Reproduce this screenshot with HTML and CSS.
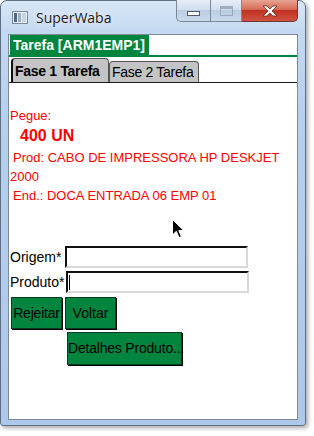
FILE: index.html
```html
<!DOCTYPE html>
<html>
<head>
<meta charset="utf-8">
<link rel="stylesheet" href="styles.css">
</head>
<body>
<div class="window">
  <div class="titlebar">
    <svg class="app-icon" width="16" height="13" viewBox="0 0 16 13">
      <rect x="0.5" y="0.5" width="15" height="12" fill="#e8eef5" stroke="#7a8a9c"/>
      <rect x="2" y="2" width="3" height="9" fill="#4a6a8a"/>
      <rect x="6" y="2" width="3" height="9" fill="#9ab0c6"/>
      <rect x="10" y="2" width="4" height="9" fill="#c8d6e4"/>
    </svg>
    <span class="title">SuperWaba</span>
    <div class="caption-buttons">
      <div class="cbtn cmin"><span class="min-glyph"></span></div>
      <div class="cbtn cmax"><span class="max-glyph"></span></div>
      <div class="cbtn cclose">
        <svg width="18" height="12" viewBox="0 0 18 12">
          <path d="M2 1 L6 1 L9 4 L12 1 L16 1 L11 6 L16 11 L12 11 L9 8 L6 11 L2 11 L7 6 Z" fill="#fff" stroke="#6b2a22" stroke-width="0.8"/>
        </svg>
      </div>
    </div>
  </div>
  <div class="client">
    <div class="header"><span class="header-title">Tarefa [ARM1EMP1]</span></div>
    <div class="tabs">
      <div class="tab tab-active">Fase 1 Tarefa</div>
      <div class="tab">Fase 2 Tarefa</div>
    </div>
    <div class="info">
      <p class="line pegue">Pegue:</p>
      <p class="line qty">400 UN</p>
      <p class="line prod">Prod: CABO DE IMPRESSORA HP DESKJET 2000</p>
      <p class="line end">End.: DOCA ENTRADA 06 EMP 01</p>
    </div>
    <div class="form">
      <div class="field field-origem"><span class="label">Origem*</span><div class="input"></div></div>
      <div class="field field-produto"><span class="label">Produto*</span><div class="input"><span class="caret"></span></div></div>
    </div>
    <div class="btn-row">
      <div class="btn btn-rejeitar">Rejeitar</div>
      <div class="btn btn-voltar">Voltar</div>
    </div>
    <div class="btn-row btn-row2">
      <div class="btn btn-detalhes">Detalhes Produto...</div>
    </div>
    <svg class="cursor" width="13" height="20" viewBox="0 0 13 20">
      <path d="M0.5 0.5 L0.5 16 L4.3 12.3 L7 18.6 L9.4 17.6 L6.8 11.6 L11.8 11.6 Z" fill="#000" stroke="#fff" stroke-width="1"/>
    </svg>
  </div>
</div>
</body>
</html>
```
FILE: styles.css
```css
* { box-sizing: border-box; }
html, body { margin: 0; padding: 0; background: #fff; }
body {
  width: 314px;
  height: 436px;
  overflow: hidden;
  font-family: "Liberation Sans", Arial, sans-serif;
}
.window {
  width: 306px;
  height: 426px;
  border: 1px solid #5f6e80;
  border-radius: 7px 7px 3px 3px;
  background: linear-gradient(to bottom, #d9e7f7 0px, #c4d9f1 30px, #b6cfee 120px, #acc8ea 100%);
  box-shadow: 2px 2px 4px rgba(0, 0, 0, 0.35);
  padding: 0 7px 5px 7px;
  display: flex;
  flex-direction: column;
}
.titlebar {
  height: 33px;
  display: flex;
  align-items: flex-start;
  flex-shrink: 0;
}
.app-icon {
  margin-top: 10px;
  margin-left: 4px;
}
.title {
  margin-left: 8px;
  margin-top: 7px;
  font-family: "Open Sans", "Noto Sans", sans-serif;
  font-size: 14px;
  color: #1b1b1b;
  text-shadow: 0 0 6px rgba(255, 255, 255, 0.9);
}
.caption-buttons {
  margin-left: auto;
  margin-top: -1px;
  display: flex;
  height: 22px;
}
.cbtn {
  height: 22px;
  display: flex;
  align-items: center;
  justify-content: center;
  border: 1px solid #7a8899;
  border-top: none;
}
.cmin {
  width: 34px;
  border-radius: 0 0 0 5px;
  background: linear-gradient(to bottom, #e6eef8 0%, #d2dfee 45%, #bccde2 50%, #c9d9ec 100%);
  border-right: none;
}
.cmax {
  width: 32px;
  background: linear-gradient(to bottom, #e6eef8 0%, #d2dfee 45%, #bccde2 50%, #c9d9ec 100%);
}
.cclose {
  width: 56px;
  border-left: none;
  border-color: #6b3a35;
  border-radius: 0 0 5px 0;
  background: linear-gradient(to bottom, #e8a493 0%, #d66a56 45%, #c0321f 50%, #d0503f 100%);
}
.min-glyph {
  width: 13px;
  height: 5px;
  margin-top: 5px;
  background: #fff;
  border: 1px solid #4d5a6b;
}
.max-glyph {
  width: 13px;
  height: 10px;
  border: 1px solid #8a97a8;
  border-top-width: 3px;
  background: transparent;
  opacity: 0.7;
}
.client {
  flex: 1;
  background: #fff;
  border: 1px solid #7d8a9a;
  position: relative;
  display: flex;
  flex-direction: column;
}
.header {
  border-bottom: 2px solid #00853f;
  height: 22px;
  display: flex;
}
.header-title {
  background: #00853f;
  color: #fff;
  font-weight: bold;
  font-size: 14px;
  width: 139px;
  margin-left: 1px;
  padding-left: 3px;
  line-height: 20px;
}
.tabs {
  display: flex;
  align-items: flex-end;
  height: 26px;
  border-bottom: 1px solid #1a1a1a;
  padding-left: 2px;
}
.tab {
  font-size: 14px;
  letter-spacing: -0.3px;
  background: #c4c4c4;
  color: #000;
  border: 1px solid #555;
  border-bottom: none;
  border-radius: 4px 4px 0 0;
  height: 21px;
  line-height: 20px;
  padding: 0 2px;
  width: 90px;
}
.tab-active {
  font-weight: bold;
  height: 24px;
  line-height: 24px;
  width: 98px;
  border-left: 2px solid #111;
  padding-left: 2px;
}
.info {
  color: #ff0000;
  font-size: 13px;
  padding-top: 24px;
  padding-left: 1px;
}
.line { margin: 0; }
.pegue { line-height: 18px; }
.qty {
  font-weight: bold;
  font-size: 16px;
  line-height: 22px;
  text-indent: 10px;
}
.prod {
  line-height: 19px;
  text-indent: 3px;
  margin-top: 1px;
}
.end {
  line-height: 19px;
  text-indent: 3px;
}
.form {
  margin-top: 41px;
  display: flex;
  flex-direction: column;
  gap: 3px;
}
.field {
  display: flex;
  align-items: center;
  height: 22px;
}
.label {
  font-size: 14px;
  color: #000;
  padding-left: 1px;
  width: 56px;
}
.field-produto .label { width: 57px; }
.input {
  width: 183px;
  height: 22px;
  background: #fff;
  border-top: 2px solid #111;
  border-left: 2px solid #111;
  border-right: 2px solid #d8d8d8;
  border-bottom: 2px solid #d8d8d8;
  display: flex;
  align-items: center;
}
.caret {
  width: 1px;
  height: 15px;
  background: #000;
  margin-left: 1px;
}
.btn-row {
  display: flex;
  gap: 3px;
  margin-top: 4px;
  padding-left: 2px;
}
.btn-row2 { margin-top: 3px; padding-left: 58px; }
.btn {
  background: #00853f;
  color: #000;
  font-size: 14px;
  height: 32px;
  line-height: 30px;
  border: 1px solid #0b3a1e;
  box-shadow: 1px 1px 0 #000;
  text-align: center;
  white-space: nowrap;
}
.btn-rejeitar { width: 51px; letter-spacing: -0.2px; }
.btn-voltar { width: 51px; }
.btn-detalhes { width: 115px; height: 33px; line-height: 31px; letter-spacing: -0.2px; }
.cursor {
  position: absolute;
  left: 163px;
  top: 184px;
}
```
